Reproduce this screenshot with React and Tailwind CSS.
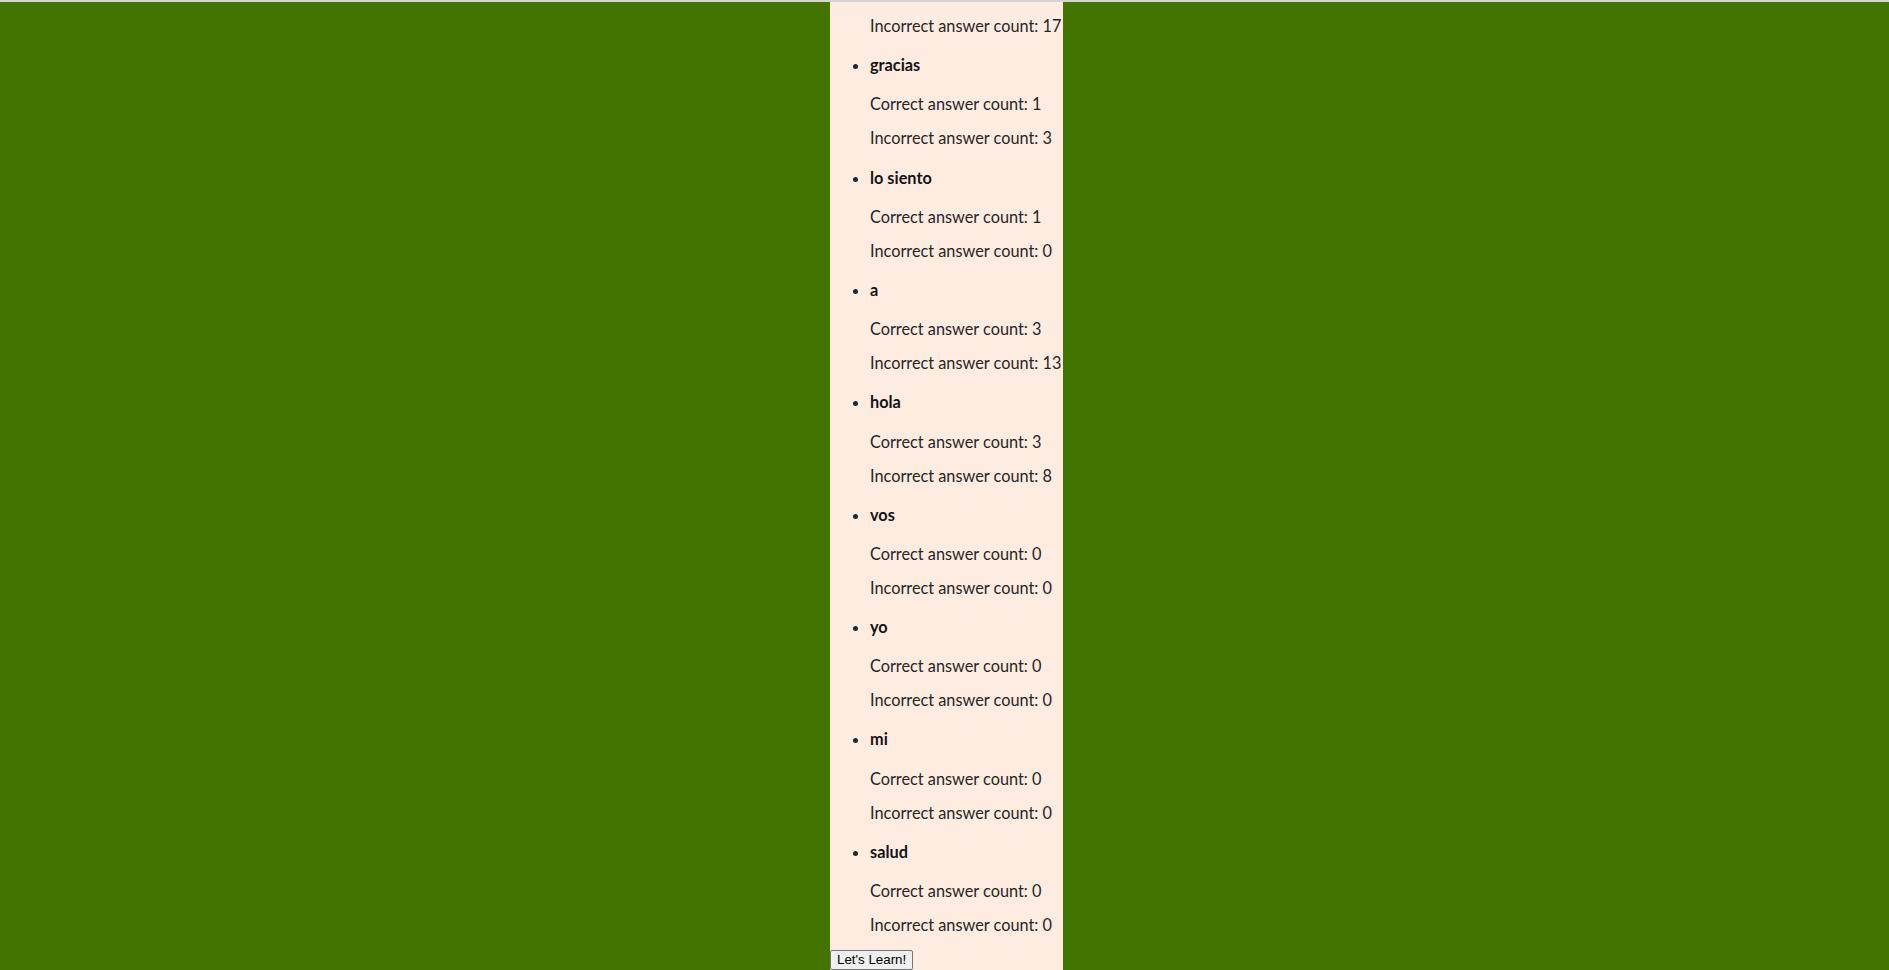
import React from 'react';

const palabras = [
  { palabra: 'gracias', correctas: 1, incorrectas: 3 },
  { palabra: 'lo siento', correctas: 1, incorrectas: 0 },
  { palabra: 'a', correctas: 3, incorrectas: 13 },
  { palabra: 'hola', correctas: 3, incorrectas: 8 },
  { palabra: 'vos', correctas: 0, incorrectas: 0 },
  { palabra: 'yo', correctas: 0, incorrectas: 0 },
  { palabra: 'mi', correctas: 0, incorrectas: 0 },
  { palabra: 'salud', correctas: 0, incorrectas: 0 },
];

export default function App() {
  return (
    <div className="h-screen overflow-hidden flex flex-col bg-[#447400] font-['Lato','Open_Sans',sans-serif] text-[16.3px] leading-[18px]">
      <div className="h-[2px] shrink-0 bg-[#d4d4d4]" />
      <div className="ml-[830px] w-[233px] flex-1 bg-[#ffece1] flow-root">
        <ul className="list-disc pl-10 mb-4 text-[#262626]">
          <li className="list-none">
            <p className="mt-[15px] mb-4 whitespace-nowrap">Incorrect answer count: 17</p>
          </li>
          {palabras.map((p) => (
            <li key={p.palabra}>
              <h4 className="my-[21.2px] font-bold text-[#141414]">{p.palabra}</h4>
              <p className="my-4 whitespace-nowrap">Correct answer count: {p.correctas}</p>
              <p className="my-4 whitespace-nowrap">Incorrect answer count: {p.incorrectas}</p>
            </li>
          ))}
        </ul>
        <button className="block bg-[#efefef] border border-[#767676] rounded-[2px] px-[6px] py-[1px] text-[13.33px] leading-[16px] text-black font-['Liberation_Sans',Arial,sans-serif]">
          Let's Learn!
        </button>
      </div>
    </div>
  );
}
